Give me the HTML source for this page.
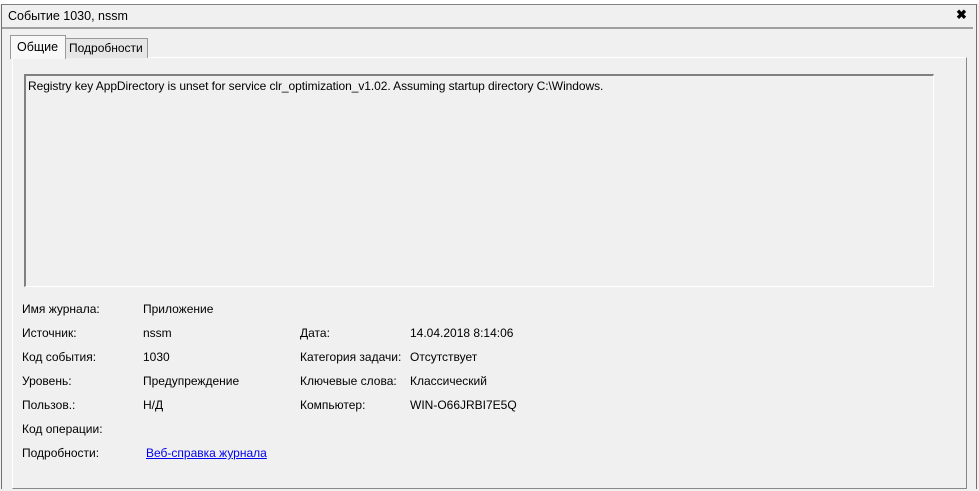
<!DOCTYPE html>
<html><head><meta charset="utf-8"><style>
body{margin:0;width:979px;height:491px;background:#f0f0f0;font-family:"Liberation Sans",Arial,sans-serif;font-size:12px;color:#000;position:relative;overflow:hidden}
.a{position:absolute;white-space:nowrap}
</style></head><body>
<div class="a" style="left:0;top:0;width:979px;height:4px;background:#fff"></div>
<div class="a" style="left:1px;top:4px;width:974px;height:484px;border:1px solid #707070;border-top:1px solid #808080;border-bottom:none"></div>
<div class="a" style="left:8px;top:9px;font-size:12.5px">Событие 1030, nssm</div>
<div class="a" style="left:956px;top:7px;font-size:13px;font-weight:bold">✖</div>
<div class="a" style="left:2px;top:27px;width:971px;height:2px;background:#a0a0a0"></div>
<div class="a" style="left:12px;top:57px;width:953px;height:430px;border:1px solid #fff;border-right:1px solid #888;border-bottom:1px solid #888"></div>
<div class="a" style="left:65px;top:38px;width:81px;height:19px;background:#e6e6e6;border:1px solid #999;border-bottom:none"></div>
<div class="a" style="left:69px;top:41px;font-size:12px">Подробности</div>
<div class="a" style="left:10px;top:35px;width:54px;height:23px;background:#f8f8f8;border:1px solid #999;border-bottom:none"></div>
<div class="a" style="left:17px;top:40px;font-size:12.5px">Общие</div>
<div class="a" style="left:24px;top:74px;width:907px;height:210px;border-top:2px solid #808080;border-left:2px solid #808080;border-right:1px solid #fff;border-bottom:1px solid #fff"></div>
<div class="a" style="left:28px;top:79px;letter-spacing:-0.07px">Registry key AppDirectory is unset for service clr_optimization_v1.02. Assuming startup directory C:\Windows.</div>
<div class="a" style="left:22px;top:302px">Имя журнала:</div><div class="a" style="left:143px;top:302px">Приложение</div>
<div class="a" style="left:22px;top:326px">Источник:</div><div class="a" style="left:143px;top:326px">nssm</div>
<div class="a" style="left:300px;top:326px">Дата:</div><div class="a" style="left:410px;top:326px">14.04.2018 8:14:06</div>
<div class="a" style="left:22px;top:350px">Код события:</div><div class="a" style="left:143px;top:350px">1030</div>
<div class="a" style="left:300px;top:350px">Категория задачи:</div><div class="a" style="left:410px;top:350px">Отсутствует</div>
<div class="a" style="left:22px;top:374px">Уровень:</div><div class="a" style="left:143px;top:374px">Предупреждение</div>
<div class="a" style="left:300px;top:374px">Ключевые слова:</div><div class="a" style="left:410px;top:374px">Классический</div>
<div class="a" style="left:22px;top:398px">Пользов.:</div><div class="a" style="left:143px;top:398px">Н/Д</div>
<div class="a" style="left:300px;top:398px">Компьютер:</div><div class="a" style="left:410px;top:398px">WIN-O66JRBI7E5Q</div>
<div class="a" style="left:22px;top:422px">Код операции:</div>
<div class="a" style="left:22px;top:446px">Подробности:</div><div class="a" style="left:146px;top:446px;color:#0000ee;text-decoration:underline">Веб-справка журнала </div>
</body></html>
